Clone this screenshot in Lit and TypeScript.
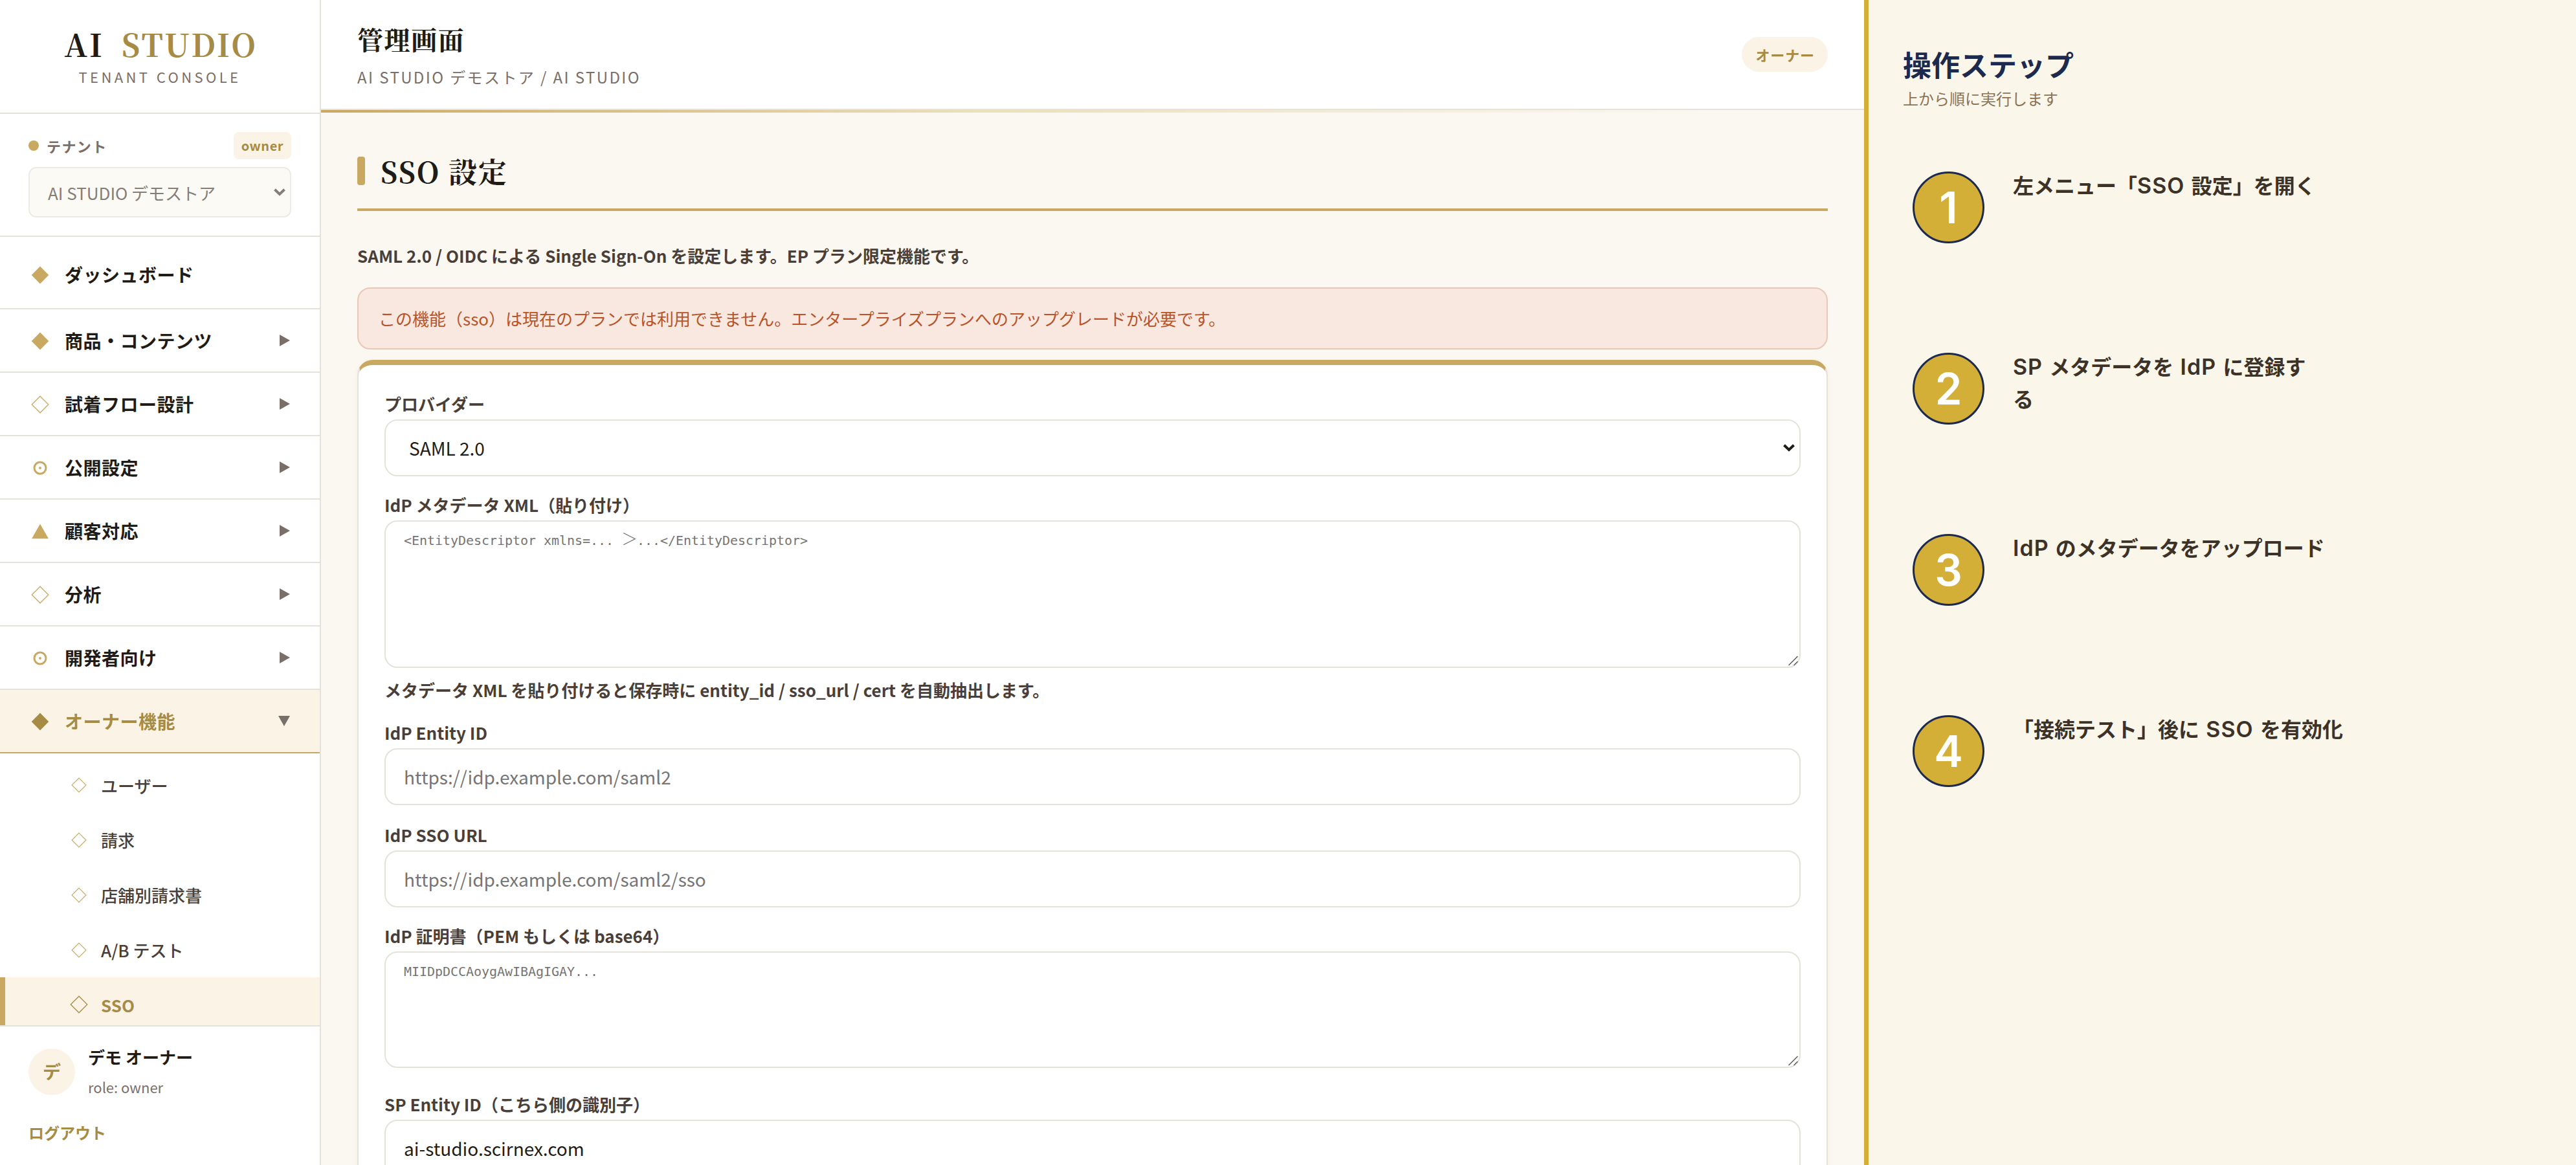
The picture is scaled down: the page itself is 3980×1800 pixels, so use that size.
import { LitElement, html, css, svg } from "lit";
import { customElement, property } from "lit/decorators.js";
import { classMap } from "lit/directives/class-map.js";

type Glyph = "solid" | "hollow" | "target" | "triangle";

interface NavItem {
  label: string;
  glyph: Glyph;
  expandable?: boolean;
  open?: boolean;
}

const NAV: NavItem[] = [
  { label: "ダッシュボード", glyph: "solid" },
  { label: "商品・コンテンツ", glyph: "solid", expandable: true },
  { label: "試着フロー設計", glyph: "hollow", expandable: true },
  { label: "公開設定", glyph: "target", expandable: true },
  { label: "顧客対応", glyph: "triangle", expandable: true },
  { label: "分析", glyph: "hollow", expandable: true },
  { label: "開発者向け", glyph: "target", expandable: true },
  { label: "オーナー機能", glyph: "solid", expandable: true, open: true },
];

const SUB = ["ユーザー", "請求", "店舗別請求書", "A/B テスト", "SSO"];

const STEPS: string[][] = [
  ["左メニュー「SSO 設定」を開く"],
  ["SP メタデータを IdP に登録す", "る"],
  ["IdP のメタデータをアップロード"],
  ["「接続テスト」後に SSO を有効化"],
];

const base = css`
  *,
  *::before,
  *::after {
    box-sizing: border-box;
  }
  :host {
    box-sizing: border-box;
    --gold: #c9a961;
    --gold-dark: #a68b45;
    --gold-soft: #fbf4e6;
    --ink: #1f1b16;
    --ink-2: #4a3f38;
    --muted: #7a6e68;
    --line: #e5e2db;
    --sans: "Noto Sans CJK JP", sans-serif;
    --serif: "Noto Serif CJK JP", "Noto Serif JP", "Liberation Serif", "Noto Sans CJK JP", serif;
    --mono: "DejaVu Sans Mono", "Liberation Mono", monospace;
  }
  svg {
    display: block;
    flex: none;
  }
`;

const glyphs: Record<Glyph, unknown> = {
  solid: svg`<path d="M14 0.6 27.3 14 14 27.4 0.7 14Z" fill="currentColor"/>`,
  hollow: svg`<path d="M14 1.2 26.8 14 14 26.8 1.2 14Z" fill="none" stroke="currentColor" stroke-width="1.3"/>`,
  target: svg`<circle cx="14" cy="14" r="9" fill="none" stroke="currentColor" stroke-width="3"/><circle cx="14" cy="14" r="1.9" fill="currentColor"/>`,
  triangle: svg`<path d="M14 2.5 27 25.2H1Z" fill="currentColor"/>`,
};

const icon = (name: Glyph, size = 28) =>
  html`<svg width=${size} height=${size} viewBox="0 0 28 28">${glyphs[name]}</svg>`;

const chevron = html`<svg width="18" height="12" viewBox="0 0 18 12">
  <path d="M1.5 1.8 9 9 16.5 1.8" fill="none" stroke="currentColor" stroke-width="4" />
</svg>`;

@customElement("side-nav")
export class SideNav extends LitElement {
  static styles = [
    base,
    css`
      :host {
        display: flex;
        flex-direction: column;
        flex: none;
        width: 496px;
        height: 1800px;
        background: #fff;
        border-right: 2px solid var(--line);
        font-family: var(--sans);
        color: var(--ink);
      }
      .brand {
        height: 176px;
        border-bottom: 2px solid var(--line);
        padding-top: 36px;
        text-align: center;
        flex: none;
      }
      .brand-name {
        padding-left: 3px;
        font: 700 48px/64px var(--serif);
        letter-spacing: 2.8px;
      }
      .brand-name .accent {
        margin-left: 12px;
        color: var(--gold-dark);
      }
      .brand-sub {
        margin-top: 2px;
        font-size: 22px;
        line-height: 32px;
        letter-spacing: 4.4px;
        color: var(--muted);
      }
      .tenant {
        height: 190px;
        padding: 28px 44px 0;
        border-bottom: 2px solid var(--line);
        flex: none;
      }
      .tenant-row {
        display: flex;
        align-items: center;
        height: 42px;
      }
      .dot {
        width: 16px;
        height: 16px;
        border-radius: 50%;
        background: var(--gold);
        margin-right: 12px;
      }
      .tenant-label {
        font-size: 22px;
        font-weight: 700;
        letter-spacing: 1.4px;
        color: var(--muted);
      }
      .badge {
        margin-left: auto;
        height: 42px;
        padding: 0 12px;
        border-radius: 8px;
        background: var(--gold-soft);
        color: var(--gold-dark);
        font-size: 20px;
        line-height: 42px;
        font-weight: 700;
        letter-spacing: 0.5px;
      }
      .tenant-select {
        display: flex;
        align-items: center;
        justify-content: space-between;
        height: 78px;
        margin-top: 12px;
        padding: 0 7px 0 28px;
        border: 2px solid #eeebe6;
        border-radius: 12px;
        background: #fcfaf5;
        color: #857d77;
        font-size: 26px;
      }
      .nav {
        flex: 1;
        min-height: 0;
        overflow: hidden;
      }
      .item {
        display: flex;
        align-items: center;
        height: 98px;
        padding: 0 46px 0 48px;
        border-bottom: 2px solid var(--line);
        font-size: 28px;
        font-weight: 700;
        letter-spacing: 0.5px;
      }
      .item.first {
        height: 112px;
        padding-top: 6px;
      }
      .item > svg:first-child {
        color: var(--gold);
        margin: 2px 24px 0 0;
      }
      .item.open {
        background: var(--gold-soft);
        border-bottom-color: var(--gold);
        color: var(--gold-dark);
      }
      .item.open > svg:first-child {
        color: var(--gold-dark);
      }
      .caret {
        margin-left: auto;
        color: var(--muted);
      }
      .sub {
        padding-top: 6.8px;
      }
      .sub-item {
        display: flex;
        align-items: center;
        height: 84.8px;
        padding-left: 110px;
        font-size: 26px;
        font-weight: 500;
        color: var(--ink-2);
      }
      .sub-item svg {
        margin-right: 22px;
        color: var(--gold);
      }
      .sub-item.active {
        padding-left: 100px;
        border-left: 8px solid var(--gold);
        background: var(--gold-soft);
        color: var(--gold-dark);
        font-weight: 700;
      }
      .sub-item.active svg {
        margin-right: 20px;
        color: var(--gold-dark);
      }
      .user {
        flex: none;
        height: 216px;
        border-top: 2px solid var(--line);
        padding: 34px 44px 0;
      }
      .user-row {
        display: flex;
        align-items: center;
        gap: 20px;
        height: 72px;
      }
      .avatar {
        width: 72px;
        height: 72px;
        border-radius: 50%;
        background: var(--gold-soft);
        color: var(--gold-dark);
        font-size: 28px;
        font-weight: 700;
        line-height: 70px;
        text-align: center;
      }
      .user-name {
        font-size: 26px;
        font-weight: 700;
        line-height: 46px;
      }
      .user-role {
        font-size: 22px;
        line-height: 46px;
        color: var(--muted);
      }
      .logout {
        margin-top: 38px;
        font-size: 24px;
        line-height: 40px;
        font-weight: 700;
        color: var(--gold-dark);
      }
    `,
  ];

  render() {
    return html`
      <div class="brand">
        <div class="brand-name">AI <span class="accent">STUDIO</span></div>
        <div class="brand-sub">TENANT CONSOLE</div>
      </div>
      <div class="tenant">
        <div class="tenant-row">
          <span class="dot"></span>
          <span class="tenant-label">テナント</span>
          <span class="badge">owner</span>
        </div>
        <div class="tenant-select"><span>AI STUDIO デモストア</span>${chevron}</div>
      </div>
      <nav class="nav">
        ${NAV.map(
          (n, i) => html`<div class=${classMap({ item: true, first: i === 0, open: !!n.open })}>
            ${icon(n.glyph)}<span>${n.label}</span>
            ${n.expandable
              ? n.open
                ? html`<svg class="caret" width="18" height="16" viewBox="0 0 18 16"><path d="M0 0H18L9 16Z" fill="currentColor" /></svg>`
                : html`<svg class="caret" width="16" height="18" viewBox="0 0 16 18"><path d="M0 0 16 9 0 18Z" fill="currentColor" /></svg>`
              : null}
          </div>`,
        )}
        <div class="sub">
          ${SUB.map((s) => {
            const active = s === "SSO";
            return html`<div class=${classMap({ "sub-item": true, active })}>
              ${icon("hollow", active ? 28 : 24)}<span>${s}</span>
            </div>`;
          })}
        </div>
      </nav>
      <div class="user">
        <div class="user-row">
          <div class="avatar">デ</div>
          <div>
            <div class="user-name">デモ オーナー</div>
            <div class="user-role">role: owner</div>
          </div>
        </div>
        <div class="logout">ログアウト</div>
      </div>
    `;
  }
}

@customElement("form-field")
export class FormField extends LitElement {
  @property() label = "";
  @property() kind: "text" | "select" | "area" = "text";
  @property() text = "";
  @property({ type: Boolean }) filled = false;

  static styles = [
    base,
    css`
      :host {
        display: flex;
        flex-direction: column;
        gap: 4px;
        font-family: var(--sans);
      }
      .label {
        height: 40px;
        line-height: 40px;
        font-size: 26px;
        font-weight: 700;
        color: var(--ink-2);
      }
      .box {
        flex: 1;
        position: relative;
        display: flex;
        align-items: center;
        justify-content: space-between;
        min-height: 88px;
        padding: 0 28px;
        border: 2px solid var(--line);
        border-radius: 20px;
        background: #fff;
        font-size: 28px;
        color: #757575;
      }
      .filled {
        color: var(--ink);
      }
      .select {
        padding: 0 7px 0 36px;
      }
      .area {
        align-items: flex-start;
        padding-top: 13px;
        font: 400 20px/32px var(--mono);
        letter-spacing: -0.04px;
        white-space: pre;
      }
      .wide {
        display: inline-block;
        width: 24px;
        font: 300 25px/0 var(--sans);
      }
      .grip {
        position: absolute;
        right: 1px;
        bottom: 1px;
        color: #5c5c5c;
      }
    `,
  ];

  render() {
    return html`
      <div class="label">${this.label}</div>
      <div class=${classMap({ box: true, [this.kind]: true, filled: this.filled })}>
        <span>${this.text.split("＞").map((p, i) => (i ? html`<span class="wide">＞</span>${p}` : p))}</span>
        ${this.kind === "select" ? chevron : null}
        ${this.kind === "area"
          ? html`<svg class="grip" width="16" height="16" viewBox="0 0 16 16">
              <path d="M0.5 15 14.5 1M8.5 15 14.5 9" stroke="currentColor" stroke-width="1.5" />
            </svg>`
          : null}
      </div>
    `;
  }
}

@customElement("console-page")
export class ConsolePage extends LitElement {
  static styles = [
    base,
    css`
      :host {
        display: flex;
        flex-direction: column;
        flex: 1;
        min-width: 0;
        height: 1800px;
        overflow: hidden;
        background: #fbf8f1;
        font-family: var(--sans);
        color: var(--ink);
      }
      .header {
        display: flex;
        align-items: center;
        justify-content: space-between;
        height: 170px;
        padding: 0 56px;
        border-bottom: 2px solid var(--line);
        background: #fff;
        flex: none;
      }
      .header-title {
        font: 700 40px/58px var(--serif);
        letter-spacing: 1.6px;
      }
      .header-sub {
        margin-top: 11px;
        font-size: 24px;
        line-height: 38px;
        letter-spacing: 2.4px;
        color: var(--muted);
      }
      .pill {
        height: 54px;
        padding: 0 20px 0 21px;
        border-radius: 27px;
        background: var(--gold-soft);
        color: var(--gold-dark);
        font-size: 22px;
        line-height: 54px;
        font-weight: 700;
        letter-spacing: 0.9px;
      }
      .strip {
        flex: none;
        height: 4px;
        background: linear-gradient(90deg, var(--gold), #ebdeb9 42%, transparent 90%);
      }
      .content {
        padding: 48px 56px 0;
      }
      .section {
        display: flex;
        align-items: center;
        gap: 24px;
        height: 104px;
        padding-bottom: 16px;
        border-bottom: 4px solid var(--gold);
      }
      .bar {
        width: 12px;
        height: 44px;
        border-radius: 4px;
        background: var(--gold);
      }
      .section-title {
        font: 700 44px/64px var(--serif);
        letter-spacing: 1.8px;
      }
      .lead {
        margin-top: 48px;
        font-size: 26px;
        line-height: 42px;
        font-weight: 700;
        color: var(--ink-2);
      }
      .alert {
        height: 96px;
        margin: 28px 0 16px;
        padding: 0 31px;
        border: 2px solid #ecc6b6;
        border-radius: 20px;
        background: #f9e8df;
        color: #b8532a;
        font-size: 26px;
        line-height: 91px;
      }
      .card {
        display: flex;
        flex-direction: column;
        gap: 24px;
        padding: 40px 40px 48px;
        border: 2px solid var(--line);
        border-top: 8px solid var(--gold);
        border-radius: 24px;
        background: #fff;
        box-shadow: 0 2px 8px rgba(60, 45, 20, 0.05);
      }
      .metadata {
        height: 272px;
      }
      .certificate {
        height: 224px;
        margin-bottom: 12px;
      }
      .sso-url {
        margin-top: 2px;
      }
      .hint {
        margin-top: -12px;
        font-size: 26px;
        line-height: 44px;
        font-weight: 700;
        color: var(--ink-2);
      }
    `,
  ];

  render() {
    return html`
      <header class="header">
        <div>
          <div class="header-title">管理画面</div>
          <div class="header-sub">AI STUDIO デモストア / AI STUDIO</div>
        </div>
        <span class="pill">オーナー</span>
      </header>
      <div class="strip"></div>
      <main class="content">
        <div class="section"><span class="bar"></span><span class="section-title">SSO 設定</span></div>
        <div class="lead">SAML 2.0 / OIDC による Single Sign-On を設定します。EP プラン限定機能です。</div>
        <div class="alert">この機能（sso）は現在のプランでは利用できません。エンタープライズプランへのアップグレードが必要です。</div>
        <div class="card">
          <form-field label="プロバイダー" kind="select" text="SAML 2.0" filled></form-field>
          <form-field
            class="metadata"
            label="IdP メタデータ XML（貼り付け）"
            kind="area"
            text="<EntityDescriptor xmlns=... ＞...</EntityDescriptor>"
          ></form-field>
          <div class="hint">メタデータ XML を貼り付けると保存時に entity_id / sso_url / cert を自動抽出します。</div>
          <form-field label="IdP Entity ID" text="https://idp.example.com/saml2"></form-field>
          <form-field class="sso-url" label="IdP SSO URL" text="https://idp.example.com/saml2/sso"></form-field>
          <form-field class="certificate" label="IdP 証明書（PEM もしくは base64）" kind="area" text="MIIDpDCCAoygAwIBAgIGAY..."></form-field>
          <form-field label="SP Entity ID（こちら側の識別子）" text="ai-studio.scirnex.com" filled></form-field>
        </div>
      </main>
    `;
  }
}

@customElement("step-panel")
export class StepPanel extends LitElement {
  static styles = [
    base,
    css`
      :host {
        display: block;
        flex: none;
        width: 1100px;
        height: 1800px;
        padding: 69px 0 0 53px;
        border-left: 7px solid #d4af37;
        background: #fbf6ea;
        font-family: var(--sans);
      }
      .title {
        font-size: 44px;
        line-height: 60px;
        font-weight: 700;
        color: #1b2a4e;
      }
      .note {
        margin: 5px 0 90px;
        font-size: 24px;
        line-height: 36px;
        color: #8a7355;
      }
      .step {
        display: flex;
        height: 280px;
        padding-left: 15px;
      }
      .num {
        width: 111px;
        height: 111px;
        margin: 5px 44px 0 0;
        border: 3px solid #1b2a4e;
        border-radius: 50%;
        background: #d4af37;
        color: #fff;
        font: 600 67px/106px "Inter", sans-serif;
        text-align: center;
      }
      .text {
        font-size: 32px;
        line-height: 50px;
        font-weight: 700;
        word-spacing: 3px;
        color: #3d3228;
        white-space: nowrap;
      }
      .latin {
        font: 600 34px/0 "Inter", sans-serif;
        letter-spacing: 1px;
      }
    `,
  ];

  private line(t: string) {
    return t
      .split(/([A-Za-z]+)/)
      .map((part, i) => (i % 2 ? html`<span class="latin">${part}</span>` : part));
  }

  render() {
    return html`
      <div class="title">操作ステップ</div>
      <div class="note">上から順に実行します</div>
      ${STEPS.map(
        (lines, i) => html`<div class="step">
          <div class="num">${i + 1}</div>
          <div class="text">${lines.map((l) => html`<div>${this.line(l)}</div>`)}</div>
        </div>`,
      )}
    `;
  }
}

@customElement("app-root")
export class AppRoot extends LitElement {
  static styles = css`
    :host {
      display: flex;
      width: 3980px;
      height: 1800px;
      overflow: hidden;
    }
  `;

  render() {
    return html`<side-nav></side-nav><console-page></console-page><step-panel></step-panel>`;
  }
}
